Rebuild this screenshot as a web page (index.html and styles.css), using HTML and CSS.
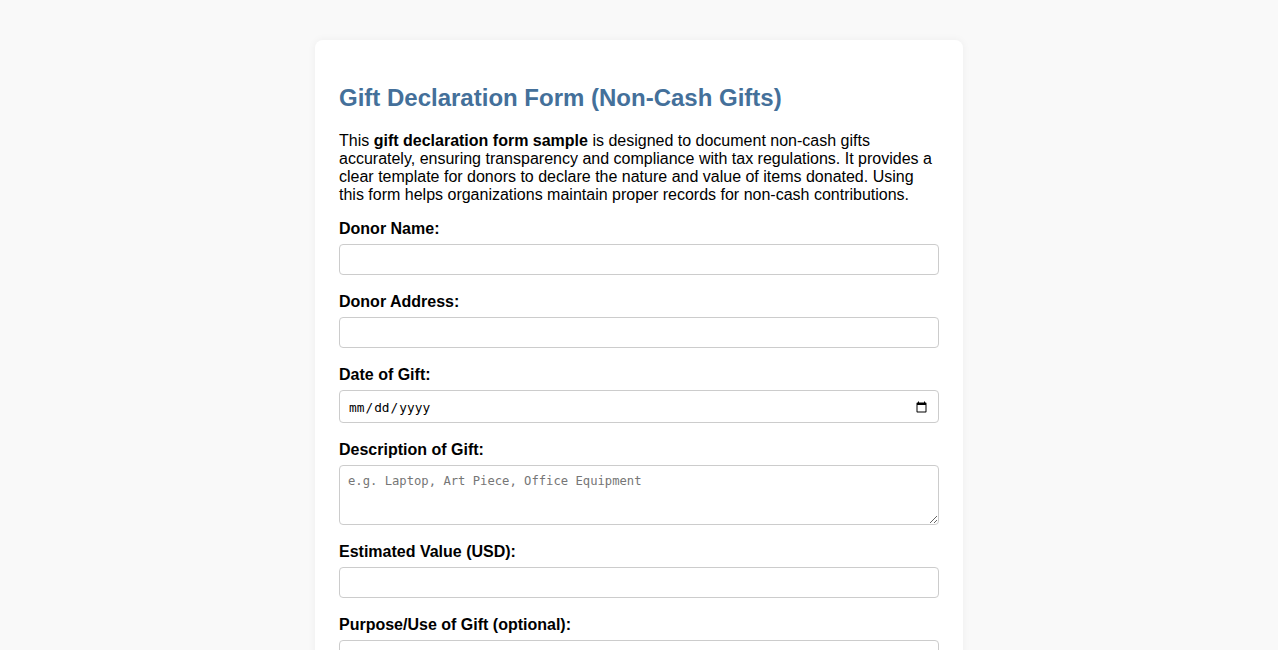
FILE: index.html
```html
<!DOCTYPE html>
<html lang="en">
<head>
<meta charset="utf-8">
<title>Gift Declaration Form (Non-Cash Gifts)</title>
<link rel="stylesheet" href="styles.css">
</head>
<body>
<div class="card">
  <h2 class="title">Gift Declaration Form (Non-Cash Gifts)</h2>
  <p class="intro">This <strong>gift declaration form sample</strong> is designed to document non-cash gifts accurately, ensuring transparency and compliance with tax regulations. It provides a clear template for donors to declare the nature and value of items donated. Using this form helps organizations maintain proper records for non-cash contributions.</p>
  <form class="form">
    <label class="label" for="donor-name">Donor Name:</label>
    <input class="field" type="text" id="donor-name">

    <label class="label" for="donor-address">Donor Address:</label>
    <input class="field" type="text" id="donor-address">

    <label class="label" for="gift-date">Date of Gift:</label>
    <input class="field date" type="date" id="gift-date">

    <label class="label" for="gift-desc">Description of Gift:</label>
    <textarea class="field area" id="gift-desc" placeholder="e.g. Laptop, Art Piece, Office Equipment"></textarea>

    <label class="label" for="gift-value">Estimated Value (USD):</label>
    <input class="field" type="number" id="gift-value">

    <label class="label" for="gift-purpose">Purpose/Use of Gift (optional):</label>
    <input class="field" type="text" id="gift-purpose">

    <label class="label" for="signature">Donor Signature:</label>
    <input class="field" type="text" id="signature">
  </form>
</div>
</body>
</html>
```
FILE: styles.css
```css
html, body {
  margin: 0;
  padding: 0;
}
body {
  background: #f9f9f9;
  font-family: "Liberation Sans", Arial, sans-serif;
  font-size: 16px;
  color: #000;
  padding: 40px 0;
}
.card {
  width: 600px;
  margin: 0 auto;
  padding: 24px;
  background: #fff;
  border-radius: 8px;
  box-shadow: 0 0 8px rgba(0, 0, 0, 0.05);
}
.title {
  font-size: 24px;
  font-weight: bold;
  color: #44709a;
  margin: 20px 0;
}
.intro {
  margin: 16px 0;
}
.form {
  display: flex;
  flex-direction: column;
}
.label {
  display: block;
  font-weight: bold;
  margin: 0 0 6px;
}
.field {
  box-sizing: border-box;
  width: 100%;
  margin: 0 0 18px;
  padding: 7px 8px;
  border: 1px solid #ccc;
  border-radius: 4px;
  font-family: "Liberation Sans", Arial, sans-serif;
  font-size: 13.33px;
  background: #fff;
  color: #000;
}
.date {
  font-family: "DejaVu Sans Mono", monospace;
  font-size: 12.8px;
  height: 33px;
  padding-top: 8px;
  padding-bottom: 6px;
}
.area {
  font-family: "DejaVu Sans Mono", monospace;
  font-size: 12.2px;
  height: 60px;
  padding-top: 8px;
  resize: vertical;
}
.area::placeholder {
  color: #767676;
}
```
